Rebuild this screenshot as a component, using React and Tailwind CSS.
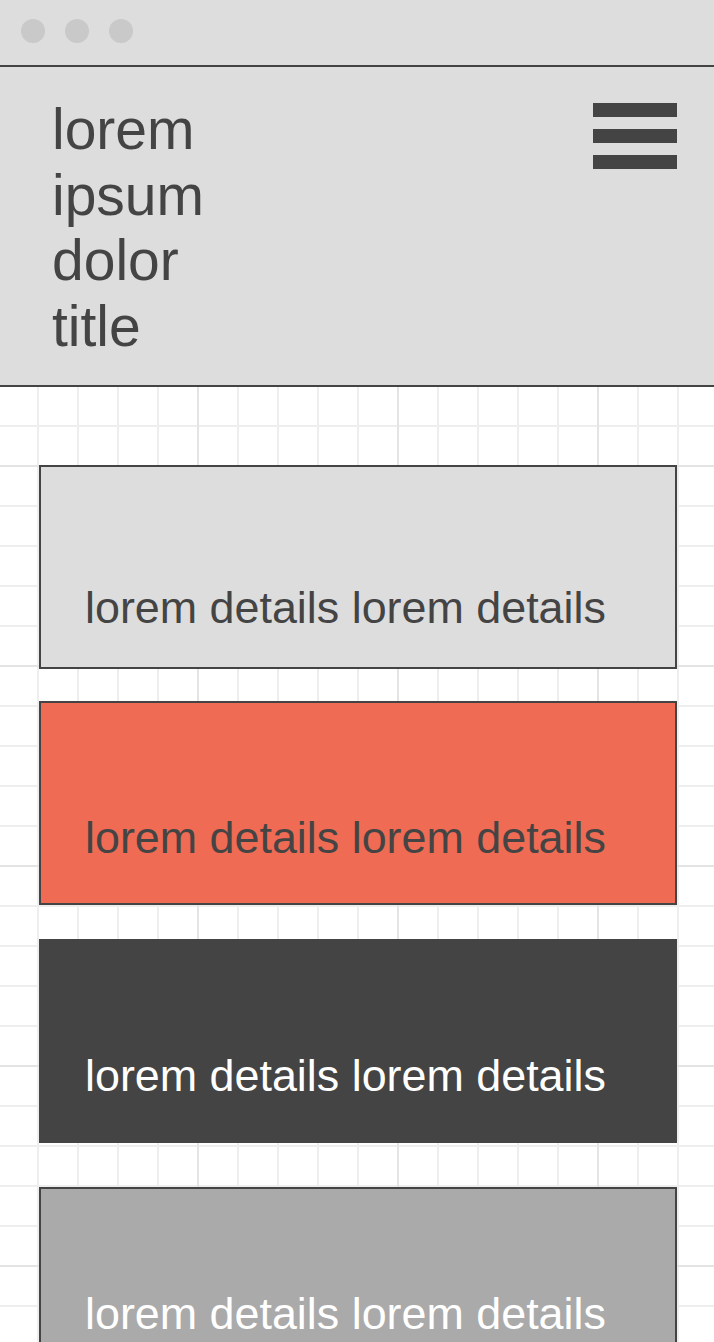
const cards = [
  { bg: 'bg-[#dddddd]', text: 'text-[#444444]', pad: 'pt-[119px]', gap: 'mt-[78px]' },
  { bg: 'bg-[#ef6b53]', text: 'text-[#444444]', pad: 'pt-[113px]', gap: 'mt-[32px]' },
  { bg: 'bg-[#444444]', text: 'text-white', pad: 'pt-[113px]', gap: 'mt-[34px]' },
  { bg: 'bg-[#aaaaaa]', text: 'text-white', pad: 'pt-[103px]', gap: 'mt-[44px]' }
];

function Card({ bg, text, pad, gap }) {
  return (
    <div className={`${gap} ml-[39px] w-[638px] h-[204px] shrink-0 border-2 border-[#444444] ${bg} ${pad} pl-[44px]`}>
      <p className={`text-[44.85px] leading-none whitespace-nowrap ${text}`}>lorem details lorem details</p>
    </div>
  );
}

export default function App() {
  return (
    <div className="h-[1342px] w-[714px] overflow-hidden flex flex-col bg-white font-['Liberation_Sans',Arial,sans-serif]">
      <div className="h-[67px] shrink-0 bg-[#dddddd] border-b-2 border-[#444444] flex items-start gap-5 pl-[21px] pt-[19px]">
        <span className="w-6 h-6 rounded-full bg-[#c9c9c9]" />
        <span className="w-6 h-6 rounded-full bg-[#c9c9c9]" />
        <span className="w-6 h-6 rounded-full bg-[#c9c9c9]" />
      </div>

      <header className="h-[320px] shrink-0 bg-[#dddddd] border-b-2 border-[#444444] flex justify-between pl-[52px] pr-[37px]">
        <h1 className="pt-[30px] text-[57px] leading-[1.15] text-[#444444] font-normal">
          lorem<br />ipsum<br />dolor<br />title
        </h1>
        <button className="mt-[36px] flex flex-col gap-3 h-fit" title="Menu">
          <span className="block w-[84px] h-[14px] bg-[#444444]" />
          <span className="block w-[84px] h-[14px] bg-[#444444]" />
          <span className="block w-[84px] h-[14px] bg-[#444444]" />
        </button>
      </header>

      <main className="flex-1 flex flex-col bg-white [background-image:linear-gradient(to_right,#e4e4e4_2px,transparent_2px),linear-gradient(to_bottom,#e4e4e4_2px,transparent_2px),linear-gradient(to_right,#eeeeee_2px,transparent_2px),linear-gradient(to_bottom,#eeeeee_2px,transparent_2px)] [background-size:200px_200px,200px_200px,40px_40px,40px_40px] [background-position:197px_78px,197px_78px,37px_38px,37px_38px]">
        {cards.map((c, i) => (
          <Card key={i} {...c} />
        ))}
      </main>
    </div>
  );
}
